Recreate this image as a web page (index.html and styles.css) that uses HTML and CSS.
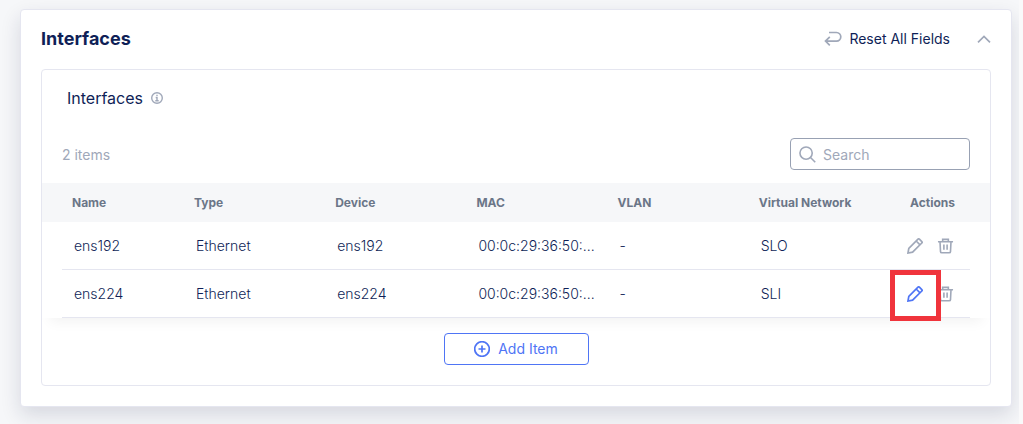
FILE: index.html
```html
<!DOCTYPE html>
<html lang="en">
<head>
<meta charset="utf-8">
<meta name="viewport" content="width=device-width, initial-scale=1">
<title>Interfaces</title>
<link rel="stylesheet" href="styles.css">
</head>
<body>
<svg class="sprite" aria-hidden="true">
  <symbol id="pencil" viewBox="0 0 16 16"><path d="M1 15l.8-4.6L11 1.2a1 1 0 0 1 1.400 0l2.400 2.400a1 1 0 0 1 0 1.400L5.600 14.200zM9.200 3l3.800 3.800"/></symbol>
  <symbol id="trash" viewBox="0 0 18 16"><path d="M1 3.500h16M6 3.300V1h6v2.300M3.200 3.700l.5 10.200a1.400 1.400 0 0 0 1.400 1.300h7.800a1.400 1.400 0 0 0 1.400-1.300l.5-10.200M7.300 6.500v5.500M10.700 6.500v5.500"/></symbol>
</svg>
<main class="page">
  <section class="card">
    <header class="card-header">
      <h1 class="card-title">Interfaces</h1>
      <button class="reset" type="button">
        <svg class="icon-reset" viewBox="0 0 18 16" aria-hidden="true"><path d="M5 1.500h7.500a4.300 4.300 0 0 1 0 8.600H1.500M5.800 5.900L1.500 10.100l4.300 4.200"/></svg>
        Reset All Fields
      </button>
      <button class="collapse" type="button" aria-label="Collapse section">
        <svg class="icon-chevron" viewBox="0 0 14 8" aria-hidden="true"><path d="M1 7.300l6-5.800 6 5.800"/></svg>
      </button>
    </header>
    <div class="panel">
      <h2 class="panel-title">Interfaces
        <svg class="icon-info" viewBox="0 0 12 12" aria-hidden="true"><circle cx="6" cy="6" r="5.300"/><path d="M6 2.700v1.400M4.700 5.500H6v3M4.300 8.700h3.400"/></svg>
      </h2>
      <div class="toolbar">
        <span class="count">2 items</span>
        <label class="search">
          <svg class="icon-search" viewBox="0 0 18 18" aria-hidden="true"><circle cx="7.500" cy="7.500" r="6.500"/><path d="M12.200 12.200l5 5"/></svg>
          <input class="search-input" type="text" placeholder="Search" aria-label="Search">
        </label>
      </div>
      <div class="table-wrap">
        <table class="table">
          <thead>
            <tr><th class="col-name">Name</th><th>Type</th><th>Device</th><th>MAC</th><th>VLAN</th><th>Virtual Network</th><th class="col-actions">Actions</th></tr>
          </thead>
          <tbody>
            <tr>
              <td>ens192</td><td>Ethernet</td><td>ens192</td><td>00:0c:29:36:50:...</td><td>-</td><td>SLO</td>
              <td class="cell-actions"><div class="actions">
                <button class="action" type="button" aria-label="Edit ens192"><svg class="icon-pencil"><use href="#pencil"/></svg></button>
                <button class="action" type="button" aria-label="Delete ens192"><svg class="icon-trash"><use href="#trash"/></svg></button>
              </div></td>
            </tr>
            <tr>
              <td>ens224</td><td>Ethernet</td><td>ens224</td><td>00:0c:29:36:50:...</td><td>-</td><td>SLI</td>
              <td class="cell-actions"><div class="actions">
                <button class="action active" type="button" aria-label="Edit ens224"><svg class="icon-pencil"><use href="#pencil"/></svg></button>
                <button class="action" type="button" aria-label="Delete ens224"><svg class="icon-trash"><use href="#trash"/></svg></button>
              </div></td>
            </tr>
          </tbody>
        </table>
      </div>
      <div class="panel-footer">
        <button class="add" type="button">
          <svg class="icon-add" viewBox="0 0 16 16" aria-hidden="true"><circle cx="8" cy="8" r="7.300"/><path d="M8 4.500v7M4.500 8h7"/></svg>
          Add Item
        </button>
      </div>
    </div>
  </section>
</main>
</body>
</html>
```

FILE: styles.css
```css
* {
  box-sizing: border-box;
}

body {
  margin: 0;
  padding-right: 4px;
  background: #f9f9fa;
  color: #0f1f57;
  font-family: Inter, "Liberation Sans", sans-serif;
  font-size: 14px;
  line-height: 20px;
}

button {
  display: inline-flex;
  align-items: center;
  justify-content: center;
  padding: 0;
  border: 0;
  background: none;
  color: inherit;
  font: inherit;
  cursor: pointer;
}

svg {
  display: block;
  flex: none;
  fill: none;
  stroke: #a0a8b9;
  stroke-width: 1.7;
}

.sprite {
  position: absolute;
  width: 0;
  height: 0;
}

.page {
  min-height: 100vh;
  padding: 9px 7px 17px 20px;
  overflow: hidden;
  background: #f6f7f9;
}

.card {
  padding: 0 20px 20px;
  border: 1px solid #e5e6f0;
  border-radius: 4px;
  background: #fff;
  box-shadow: 0 8px 20px rgba(20, 30, 70, 0.14);
}

.card-header {
  display: flex;
  align-items: center;
  height: 59px;
  padding-bottom: 2px;
}

.card-title {
  flex: 1;
  margin: 0;
  font-size: 18px;
  font-weight: 700;
  line-height: 24px;
}

.reset {
  gap: 7px;
}

.icon-reset {
  width: 18px;
  height: 16px;
}

.collapse {
  width: 14px;
  height: 20px;
  margin-left: 27px;
}

.icon-chevron {
  width: 14px;
  height: 8px;
}

.panel {
  border: 1px solid #e5e6f0;
  border-radius: 4px;
  overflow: hidden;
}

.panel-title {
  display: flex;
  align-items: center;
  gap: 8px;
  margin: 0;
  padding: 16px 25px;
  font-size: 16px;
  font-weight: 400;
  line-height: 24px;
}

.icon-info {
  width: 12px;
  height: 12px;
  stroke-width: 1.4;
}

.toolbar {
  display: flex;
  align-items: center;
  justify-content: space-between;
  padding: 12px 20px 13px;
}

.count {
  padding-top: 2px;
  color: #a0a8b9;
}

.search {
  display: flex;
  align-items: center;
  gap: 7px;
  width: 180px;
  height: 32px;
  padding: 0 8px;
  border: 1px solid #98a1b3;
  border-radius: 4px;
}

.icon-search {
  width: 17px;
  height: 17px;
}

.search-input {
  flex: 1;
  min-width: 0;
  padding: 2px 0 0;
  border: 0;
  outline: 0;
  background: none;
  color: inherit;
  font: inherit;
}

.search-input::placeholder {
  color: #a0a8b9;
  opacity: 1;
}

.table-wrap {
  padding: 0 20px;
  box-shadow: 0 12px 12px -8px rgba(0, 0, 0, 0.05);
}

.table {
  width: 100%;
  table-layout: fixed;
  border-collapse: separate;
  border-spacing: 0;
}

.table th {
  height: 39px;
  padding: 1px 10px 0;
  background: #f6f7f9;
  color: #6b7688;
  font-size: 12px;
  font-weight: 700;
  text-align: left;
}

.table .col-name {
  width: 122px;
  box-shadow: -20px 0 0 #f6f7f9;
}

.table .col-actions {
  width: 80px;
  padding-right: 0;
  padding-left: 20px;
  box-shadow: 20px 0 0 #f6f7f9;
}

.table td {
  height: 48px;
  padding: 1px 12px 0;
  border-bottom: 1px solid #e5e6f0;
  font-weight: 300;
  white-space: nowrap;
}

.table .cell-actions {
  padding: 0;
}

.actions {
  display: flex;
  align-items: center;
  justify-content: center;
}

.action {
  width: 30px;
  height: 30px;
}

.icon-pencil {
  width: 16px;
  height: 16px;
}

.icon-trash {
  width: 17px;
  height: 16px;
}

.active {
  position: relative;
  z-index: 1;
}

.active::after {
  content: "";
  position: absolute;
  inset: -9px -11px -12px -10px;
  border: 5px solid #f0343c;
}

.active svg {
  stroke: #4f75f5;
}

.panel-footer {
  display: flex;
  justify-content: center;
  padding: 15px 20px 20px;
}

.add {
  gap: 8px;
  width: 145px;
  height: 32px;
  border: 1px solid #4f75f5;
  border-radius: 4px;
  color: #4f75f5;
}

.icon-add {
  width: 16px;
  height: 16px;
  stroke: currentColor;
}
```
